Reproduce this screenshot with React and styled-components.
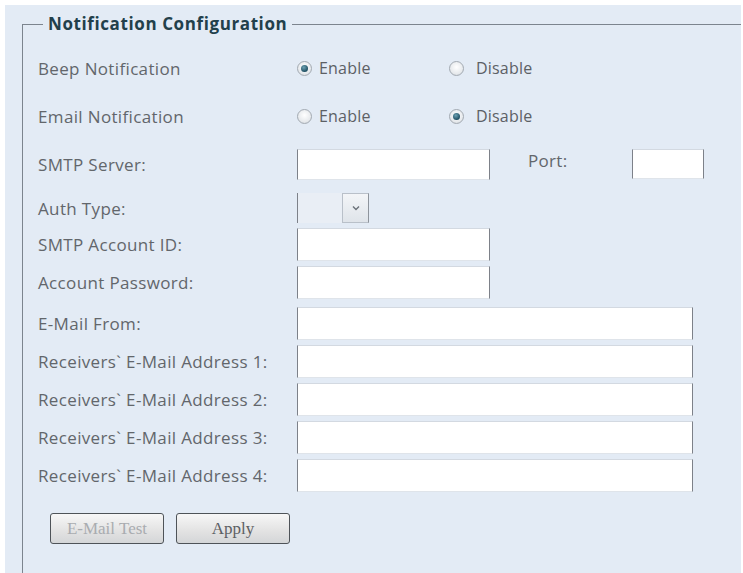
import React from 'react';
import styled, { createGlobalStyle } from 'styled-components';

const GlobalStyle = createGlobalStyle`
  html, body {
    margin: 0;
    padding: 0;
    background: #ffffff;
  }
  body {
    font-family: "Open Sans", "Noto Sans", sans-serif;
  }
`;

const Page = styled.div`
  padding: 5px 2px 0 5px;
  width: 743px;
  height: 573px;
  box-sizing: border-box;
  overflow: hidden;
`;

const Panel = styled.div`
  background: #e3ebf5;
  height: 580px;
  padding: 9px 0 0 17px;
  box-sizing: border-box;
`;

const Frame = styled.fieldset`
  margin: 0;
  padding: 0 0 0 15px;
  border: none;
  border-top: 1px solid #7c848e;
  border-left: 1px solid #7c848e;
  min-height: 600px;
  box-sizing: border-box;
`;

const Legend = styled.legend`
  margin-left: 5px;
  padding: 0 5px;
  font-family: "Open Sans", "Noto Sans", sans-serif;
  font-weight: 700;
  font-size: 17px;
  line-height: 20px;
  color: #22404b;
  letter-spacing: 0.6px;
`;

const Form = styled.div`
  display: flex;
  flex-direction: column;
  padding-top: 18px;
`;

const Row = styled.div`
  display: flex;
  align-items: center;
  height: ${(p) => p.$h || 33}px;
  margin-bottom: ${(p) => p.$gap || 5}px;
`;

const Label = styled.div`
  width: 259px;
  flex: none;
  font-size: 17px;
  color: #62666b;
  white-space: nowrap;
  letter-spacing: 0.35px;
`;

const RadioGroup = styled.div`
  display: flex;
  align-items: center;
`;

const RadioOption = styled.label`
  display: flex;
  align-items: center;
  width: ${(p) => p.$w || 'auto'};
  font-size: 16px;
  color: #5c6065;
  letter-spacing: 0.2px;
`;

const RadioDot = styled.span`
  width: 15px;
  height: 15px;
  margin-right: ${(p) => p.$mr || 7}px;
  border-radius: 50%;
  box-sizing: border-box;
  border: 1px solid #a3aab2;
  background: radial-gradient(circle at 50% 40%, #ffffff 0%, #e6e9ec 65%, #c7ccd2 100%);
  display: flex;
  align-items: center;
  justify-content: center;
  flex: none;
  &::after {
    content: '';
    display: ${(p) => (p.$checked ? 'block' : 'none')};
    width: 7px;
    height: 7px;
    border-radius: 50%;
    background: radial-gradient(circle at 40% 35%, #6ea3b4 0%, #1f4f62 70%);
  }
`;

const Input = styled.div`
  width: ${(p) => p.$w}px;
  height: ${(p) => p.$h || 31}px;
  box-sizing: border-box;
  background: #ffffff;
  border-style: solid;
  border-width: 1px;
  border-color: #d3d9e1 #7d8189 #dfe4ea #7d8189;
  flex: none;
`;

const PortLabel = styled.div`
  width: 104px;
  margin-left: 38px;
  font-size: 17px;
  color: #62666b;
  letter-spacing: 0.3px;
  align-self: flex-start;
  padding-top: 1px;
`;

const Select = styled.div`
  display: flex;
  height: 30px;
  width: 72px;
  box-sizing: border-box;
  border-left: 1px solid #7d8189;
`;

const SelectValue = styled.div`
  width: 44px;
  background: #e9eef5;
`;

const SelectArrow = styled.div`
  width: 27px;
  box-sizing: border-box;
  border: 1px solid #b9c0c9;
  border-right-color: #8e949c;
  background: linear-gradient(#f3f5f8, #dfe4ea);
  display: flex;
  align-items: center;
  justify-content: center;
`;

const ButtonBar = styled.div`
  display: flex;
  gap: 12px;
  padding-left: 12px;
  margin-top: 16px;
`;

const Button = styled.button`
  width: 114px;
  height: 31px;
  border: 1px solid #4e5358;
  border-radius: 3px;
  background: linear-gradient(#f7f7f7, #e2e2e2 60%, #d4d6d8);
  font-family: "Liberation Serif", "Times New Roman", serif;
  font-size: 17px;
  color: ${(p) => (p.disabled ? '#a9acb0' : '#5d6064')};
  padding: 0;
`;

function Radio({ checked, label, width, mr }) {
  return (
    <RadioOption $w={width}>
      <RadioDot $checked={checked} $mr={mr} />
      {label}
    </RadioOption>
  );
}

function App() {
  const receivers = [1, 2, 3, 4];
  return (
    <>
      <GlobalStyle />
      <Page>
        <Panel>
          <Frame>
            <Legend>Notification Configuration</Legend>
            <Form>
              <Row $h={32} $gap={16}>
                <Label>Beep Notification</Label>
                <RadioGroup>
                  <Radio checked label="Enable" width="152px" />
                  <Radio label="Disable" mr={12} />
                </RadioGroup>
              </Row>
              <Row $h={32} $gap={16}>
                <Label>Email Notification</Label>
                <RadioGroup>
                  <Radio label="Enable" width="152px" />
                  <Radio checked label="Disable" mr={12} />
                </RadioGroup>
              </Row>
              <Row $h={32} $gap={12}>
                <Label>SMTP Server:</Label>
                <Input $w={193} $h={31} />
                <PortLabel>Port:</PortLabel>
                <Input $w={72} $h={30} />
              </Row>
              <Row $h={32} $gap={4}>
                <Label>Auth Type:</Label>
                <Select>
                  <SelectValue />
                  <SelectArrow>
                    <svg width="8" height="6" viewBox="0 0 8 6">
                      <path d="M1 1.5 L4 4.5 L7 1.5" fill="none" stroke="#6b7179" strokeWidth="1.4" />
                    </svg>
                  </SelectArrow>
                </Select>
              </Row>
              <Row $gap={5}>
                <Label>SMTP Account ID:</Label>
                <Input $w={193} $h={33} />
              </Row>
              <Row $gap={8}>
                <Label>Account Password:</Label>
                <Input $w={193} $h={33} />
              </Row>
              <Row $gap={5}>
                <Label>E-Mail From:</Label>
                <Input $w={396} $h={33} />
              </Row>
              {receivers.map((n) => (
                <Row key={n} $gap={5}>
                  <Label>Receivers` E-Mail Address {n}:</Label>
                  <Input $w={396} $h={33} />
                </Row>
              ))}
            </Form>
            <ButtonBar>
              <Button disabled>E-Mail Test</Button>
              <Button>Apply</Button>
            </ButtonBar>
          </Frame>
        </Panel>
      </Page>
    </>
  );
}

export default App;
